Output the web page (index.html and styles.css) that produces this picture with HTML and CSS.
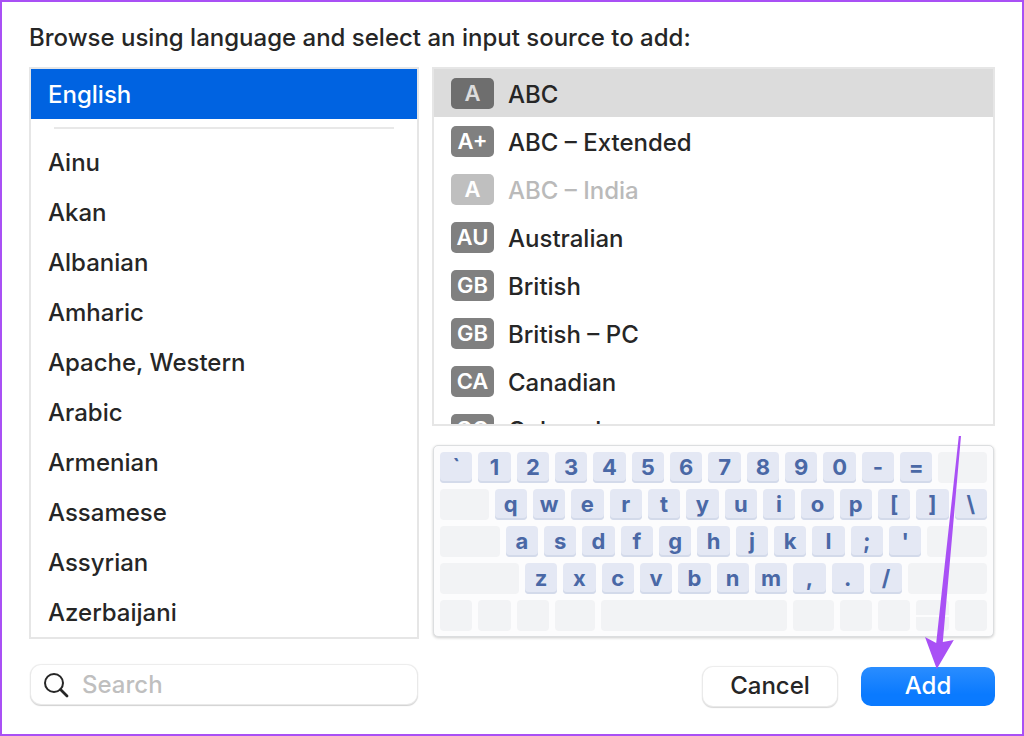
FILE: index.html
```html
<!DOCTYPE html>
<html lang="en">
<head>
  <meta charset="utf-8">
  <title>Input Sources</title>
  <link rel="stylesheet" href="styles.css">
</head>
<body>
<main class="dialog">
<h1>Browse using language and select an input source to add:</h1>

<div class="columns">

<ul class="languages">
  <li class="active">English</li>
  <li class="line"></li>
  <li>Ainu</li>
  <li>Akan</li>
  <li>Albanian</li>
  <li>Amharic</li>
  <li>Apache, Western</li>
  <li>Arabic</li>
  <li>Armenian</li>
  <li>Assamese</li>
  <li>Assyrian</li>
  <li>Azerbaijani</li>
</ul>

<div class="right">
<ul class="sources">
  <li class="active"><span class="badge">A</span>ABC</li>
  <li><span class="badge">A+</span>ABC – Extended</li>
  <li class="disabled"><span class="badge">A</span>ABC – India</li>
  <li><span class="badge">AU</span>Australian</li>
  <li><span class="badge">GB</span>British</li>
  <li><span class="badge">GB</span>British – PC</li>
  <li><span class="badge">CA</span>Canadian</li>
  <li><span class="badge">CO</span>Colemak</li>
</ul>

<div class="keyboard">
  <div class="row">
    <kbd>`</kbd><kbd>1</kbd><kbd>2</kbd><kbd>3</kbd><kbd>4</kbd><kbd>5</kbd><kbd>6</kbd><kbd>7</kbd><kbd>8</kbd><kbd>9</kbd><kbd>0</kbd><kbd>-</kbd><kbd>=</kbd><span class="blank tab"></span>
  </div>
  <div class="row">
    <span class="blank tab"></span><kbd>q</kbd><kbd>w</kbd><kbd>e</kbd><kbd>r</kbd><kbd>t</kbd><kbd>y</kbd><kbd>u</kbd><kbd>i</kbd><kbd>o</kbd><kbd>p</kbd><kbd>[</kbd><kbd>]</kbd><kbd>\</kbd>
  </div>
  <div class="row">
    <span class="blank caps"></span><kbd>a</kbd><kbd>s</kbd><kbd>d</kbd><kbd>f</kbd><kbd>g</kbd><kbd>h</kbd><kbd>j</kbd><kbd>k</kbd><kbd>l</kbd><kbd>;</kbd><kbd>'</kbd><span class="blank caps"></span>
  </div>
  <div class="row">
    <span class="blank shift"></span><kbd>z</kbd><kbd>x</kbd><kbd>c</kbd><kbd>v</kbd><kbd>b</kbd><kbd>n</kbd><kbd>m</kbd><kbd>,</kbd><kbd>.</kbd><kbd>/</kbd><span class="blank shift"></span>
  </div>
  <div class="row">
    <span class="blank"></span><span class="blank"></span><span class="blank"></span><span class="blank cmd"></span><span class="blank space"></span><span class="blank cmd"></span><span class="blank"></span><span class="blank"></span><span class="blank updown"></span><span class="blank"></span>
  </div>
</div>
</div>

</div>

<div class="footer">
<label class="search">
  <svg width="26" height="26" viewBox="0 0 26 26" fill="none" stroke="#262626" stroke-linecap="round">
    <circle cx="11" cy="11" r="9" stroke-width="2"/>
    <path d="M17.5 17.5L24 24" stroke-width="2.8"/>
  </svg>
  <input type="text" placeholder="Search" aria-label="Search">
</label>
<div class="buttons">
  <button type="button">Cancel</button>
  <div class="add">
    <button type="button" class="primary">Add</button>
    <svg class="arrow" width="36" height="233" viewBox="0 0 36 233">
      <path d="M33.8 0H36L17.8 206L28.8 204L11.8 233L0 201L11.2 207Z" fill="#a950f5"/>
    </svg>
  </div>
</div>
</div>
</main>
</body>
</html>
```
FILE: styles.css
```css
* { box-sizing: border-box; }
body { margin: 0; background: #fff; color: #262626;
  font: 450 24px/30px Inter, "Liberation Sans", sans-serif; }
ul { margin: 0; padding: 0; list-style: none; }

.dialog { min-height: 100vh; padding: 21px 27px 28px;
  border: 2px solid #a950f5; }
h1 { margin: 0 0 14px; font-size: 24px; line-height: 30px; font-weight: 450; }

.columns, .footer { display: grid; grid-template-columns: 390fr 563fr; column-gap: 13px; }

/* languages */
.languages { border: 2px solid #e6e6e6; }
.languages li { height: 50px; padding: 0 17px; line-height: 52px; }
.languages .active { background: #0063e1; color: #fff; }
.languages .line { height: 18px; padding: 8px 23px; }
.languages .line::before { content: ""; display: block; height: 2px; background: #e8e8e8; }

/* input sources */
.right { display: flex; flex-direction: column; gap: 19px; padding-bottom: 2px; min-width: 0; }
.sources { flex: 1 1 0; min-height: 0; overflow: hidden; border: 2px solid #e6e6e6; }
.sources li { display: flex; gap: 14px; height: 48px; padding: 0 17px; line-height: 51px; }
.sources .active { background: #dcdcdc; }
.sources .disabled { color: #bababa; }
.badge { width: 43px; height: 31px; margin-top: 9px; border-radius: 5px; background: #808080; color: #fff;
  font-size: 22px; line-height: 31px; font-weight: 600; text-align: center; }
.active .badge { background: #6e6e6e; color: #dcdcdc; }
.disabled .badge { background: #bfbfbf; }

/* keyboard preview */
.keyboard { display: flex; flex-direction: column; gap: 6px; margin: 0 1px; padding: 6px 6px 5px;
  border: 1px solid #dcdee0; border-radius: 5px; background: #fcfcfd;
  box-shadow: 0 1px 3px rgba(0,0,0,0.2); }
.row { display: flex; gap: 6px; height: 31px; }
kbd, .blank { flex: 32 1 0; min-width: 0; border-radius: 4px; }
kbd { background: #e4e8f4; color: #4a68a6; box-shadow: inset 0 -2px #d3daea;
  font: 700 22px/31px Inter, "Liberation Sans", sans-serif; text-align: center; }
.blank { background: #f2f3f5; }
.tab { flex-grow: 48; }
.caps { flex-grow: 59; }
.shift { flex-grow: 78; }
.cmd { flex-grow: 40; }
.space { flex-grow: 184; }
.updown { background: linear-gradient(#f2f3f5 15px, #fcfcfd 15px, #fcfcfd 17px, #f2f3f5 17px); }

/* search and buttons */
.footer { margin-top: 26px; }
.search { display: flex; align-items: center; gap: 13px; min-width: 0; height: 39px; margin: 0 2px; padding: 0 12px;
  border-radius: 10px; box-shadow: 0 0 1px 1px #ececec, 0 1px 1px 1px #cfcfcf; background: #fff; }
.search input { flex: 1; min-width: 0; padding: 1px 0 0; border: 0; outline: 0; background: none;
  color: inherit; font: inherit; }
.search input::placeholder { color: #bfbfbf; opacity: 1; }
.buttons { display: flex; justify-content: flex-end; gap: 24px; padding-top: 2px; }
button { width: 134px; height: 39px; padding: 0 0 1px; border: 0; border-radius: 10px; background: #fff;
  color: #262626; font: inherit; box-shadow: 0 0 1px 1px #ececec, 0 1px 1px 1px #d6d6d6; }
.primary { background: linear-gradient(#2a8dff, #0a7aff 70%); color: #fff; box-shadow: none; }
.add { position: relative; }
.arrow { position: absolute; right: 34px; bottom: 37px; }
```
